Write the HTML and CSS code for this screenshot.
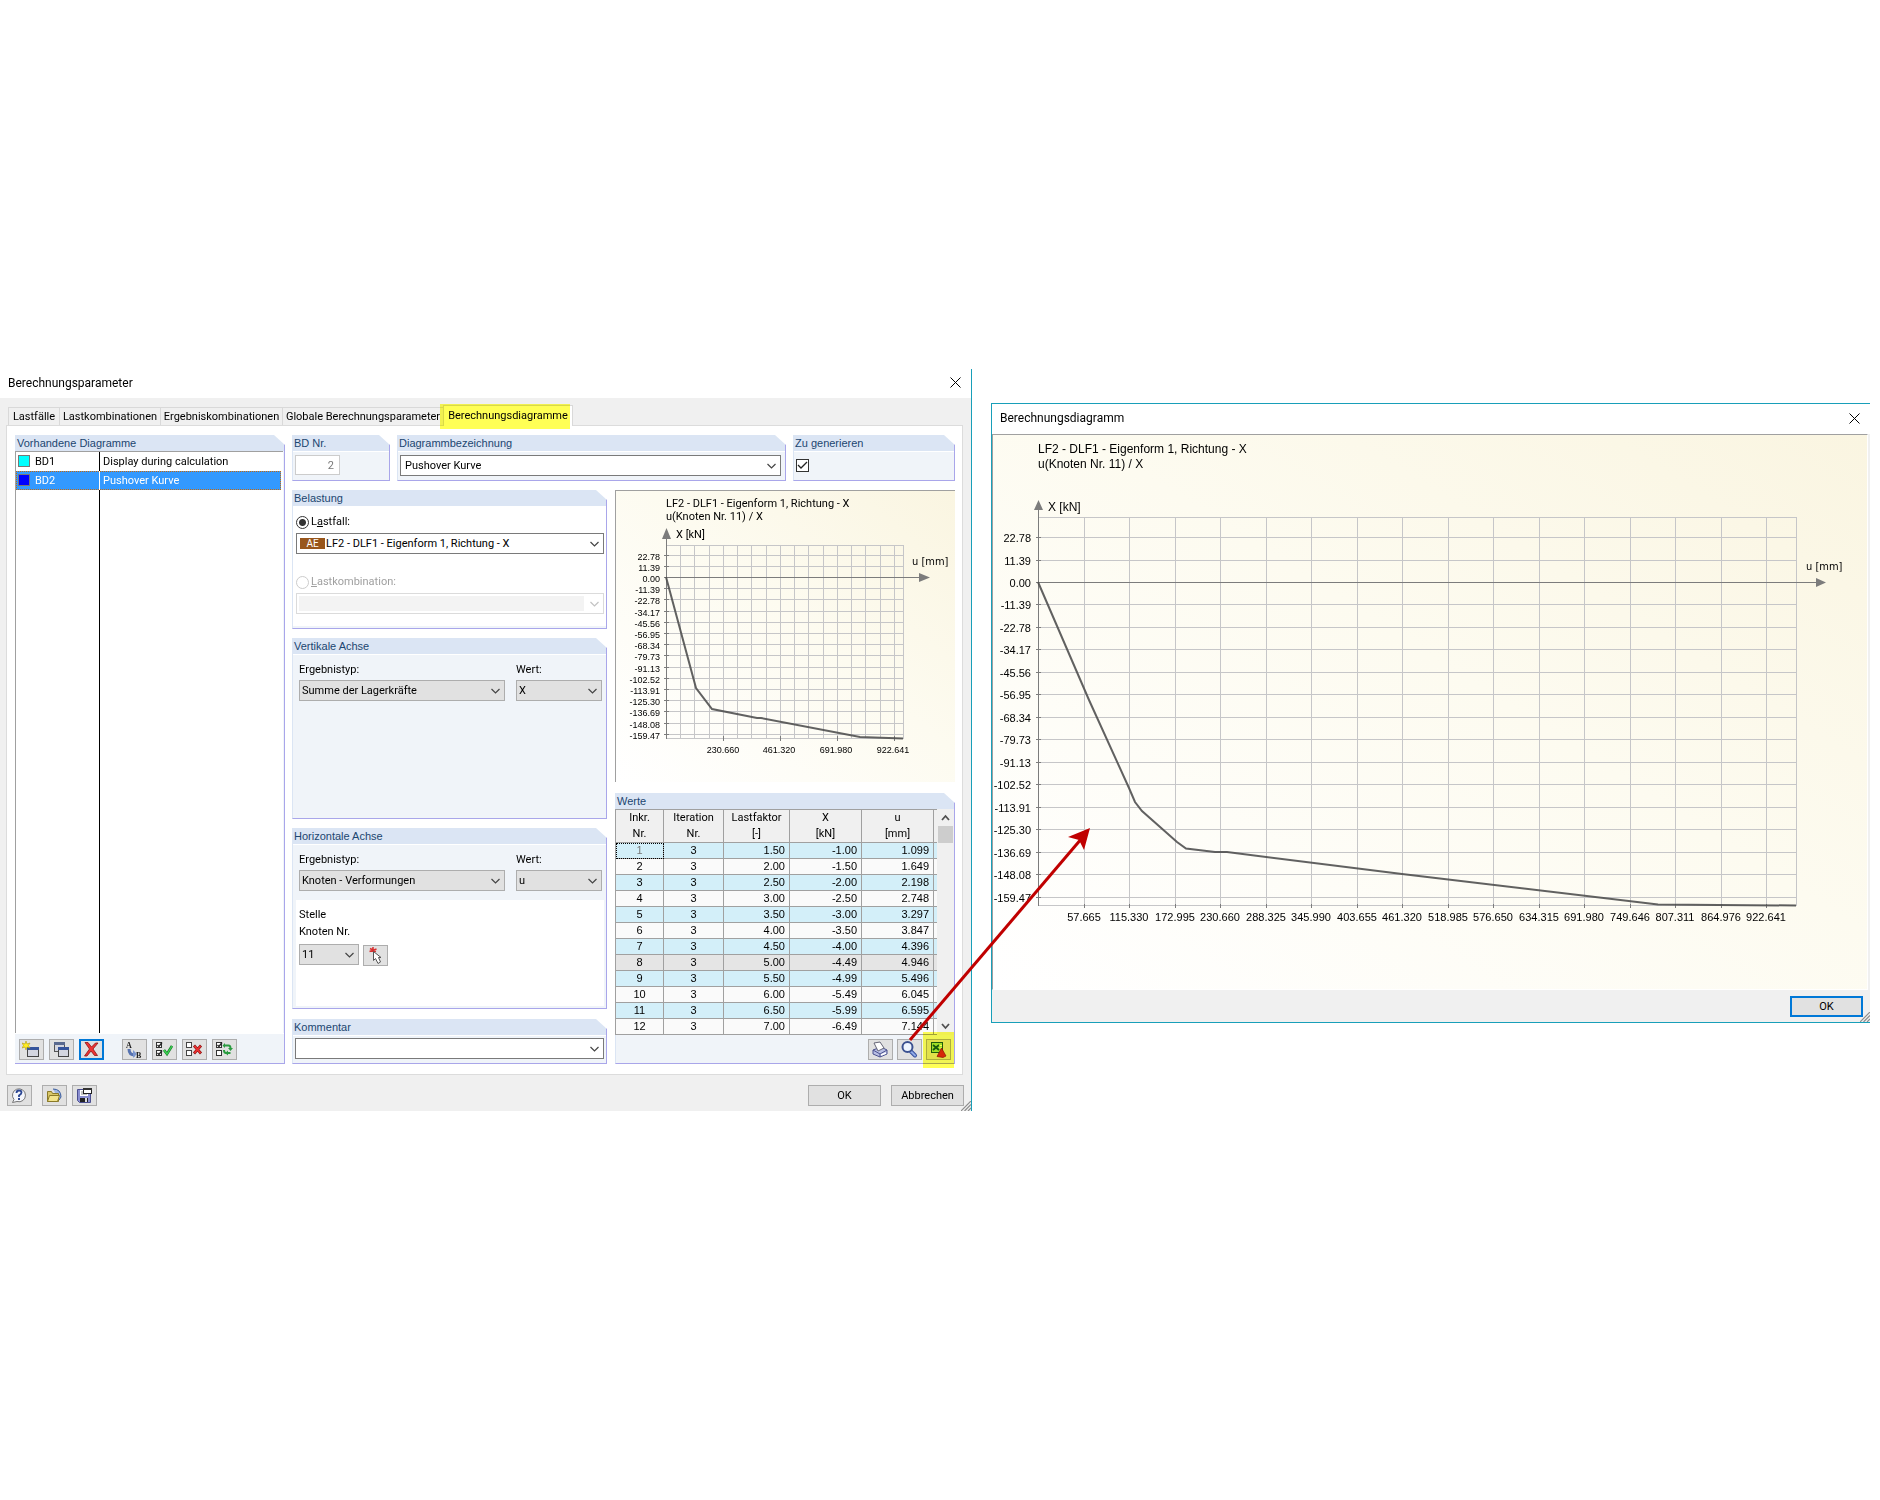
FILE: index.html
```html
<!DOCTYPE html>
<html lang="de">
<head>
<meta charset="utf-8">
<title>Berechnungsparameter</title>
<link rel="stylesheet" href="styles.css">
</head>
<body>
<main class="workspace">
  <section class="dialog dialog-main" aria-labelledby="title-main">
    <header class="titlebar">
      <h1 id="title-main">Berechnungsparameter</h1>
      <button class="close" aria-label="Schließen"><svg width="11" height="11" viewBox="0 0 11 11"><path d="M.5.5l10 10M10.500.5l-10 10" stroke="#000" fill="none"/></svg></button>
    </header>
    <nav class="tabs" role="tablist">
      <button class="tab tab-1" role="tab">Lastfälle</button>
      <button class="tab tab-2" role="tab">Lastkombinationen</button>
      <button class="tab tab-3" role="tab">Ergebniskombinationen</button>
      <button class="tab tab-4" role="tab">Globale Berechnungsparameter</button>
      <button class="tab tab-5 active" role="tab" aria-selected="true">Berechnungsdiagramme</button>
    </nav>
    <div class="panel">
      <section class="group list-group">
        <h2>Vorhandene Diagramme</h2>
        <ul class="diagram-list">
          <li><span class="nr"><i class="swatch cyan"></i>BD1</span><span class="name">Display during calculation</span></li>
          <li class="selected"><span class="nr"><i class="swatch blue"></i>BD2</span><span class="name">Pushover Kurve</span></li>
          <li class="filler"><span class="nr"></span><span class="name"></span></li>
        </ul>
        <div class="toolbar">
          <button class="tool" aria-label="Neu"><svg viewBox="0 0 18 18"><rect x="5.500" y="6.500" width="11" height="9" fill="#d4d6e0" stroke="#444"/><path d="M5 6h12v3H5z" fill="#35549c"/><path d="M4 0l1 3 3-1-1.500 2.500L8 7 5 6 4 9 3 6 0 7l1.500-2.500L0 2l3 1z" fill="#ffee20" stroke="#b09a10" stroke-width=".6"/></svg></button>
          <button class="tool" aria-label="Kopieren"><svg viewBox="0 0 18 18"><rect x="2.500" y="1.500" width="10" height="9" fill="#d4d6e0" stroke="#555"/><path d="M2 1h11v3H2z" fill="#5a6a90"/><rect x="6.500" y="6.500" width="10" height="9" fill="#d4d6e0" stroke="#444"/><path d="M6 6h11v3H6z" fill="#35549c"/></svg></button>
          <button class="tool focus" aria-label="Löschen"><svg viewBox="0 0 18 18"><path d="M3 1.500h3l3.500 4.500L13.500 2l2.500 0-5 6 4.500 6.500-3 0L9 10l-4 5-2.500 0L7.500 8z" fill="#e33" stroke="#8c1414" stroke-width=".8"/></svg></button>
          <button class="tool apart" aria-label="Umbenennen"><svg viewBox="0 0 18 18"><path d="M4 8c0 5 3 6 6 6" fill="none" stroke="#5672b0" stroke-width="3"/><path d="M8 9l4 4-4 4z" fill="#7c97d0"/><text x="1" y="7" class="icon-letter">A</text><text x="11" y="17" class="icon-letter">B</text></svg></button>
          <button class="tool" aria-label="Alle wählen"><svg viewBox="0 0 18 18"><g fill="#fff" stroke="#333"><rect x="1.500" y="1.500" width="5" height="5"/><rect x="1.500" y="9.500" width="5" height="5"/></g><path d="M2.500 4l1.500 1.500L7 1.500M2.500 12L4 13.500 7 9.500" stroke="#222" stroke-width="1.300" fill="none"/><path d="M9 9l3 4 5-8" fill="none" stroke="#167a28" stroke-width="2.600"/><path d="M9 9l3 4 5-8" fill="none" stroke="#3cd452" stroke-width="1.300"/></svg></button>
          <button class="tool" aria-label="Alle abwählen"><svg viewBox="0 0 18 18"><g fill="#fff" stroke="#444"><rect x="1.500" y="1.500" width="5" height="5"/><rect x="1.500" y="9.500" width="5" height="5"/></g><path d="M9 4.500l7 8M16 4.500l-7 8" stroke="#8c1414" stroke-width="2.800"/><path d="M9.500 5l6 7M15.500 5l-6 7" stroke="#ee3030" stroke-width="1.800"/></svg></button>
          <button class="tool" aria-label="Auswahl umkehren"><svg viewBox="0 0 18 18"><g fill="#fff" stroke="#333"><rect x="1.500" y="1.500" width="5" height="5"/><rect x="1.500" y="9.500" width="5" height="5"/></g><path d="M2.500 4l1.500 1.500L7 1.500" stroke="#222" stroke-width="1.300" fill="none"/><path d="M9 4.500h4.500q2 0 2 3M15.500 12H11q-2 0-2-3" stroke="#2a9c40" stroke-width="2" fill="none"/><path d="M13 7h5l-2.500 3zM13 9.500v5L10 12zM10 2v5L7.500 4.500z" fill="#2a9c40"/></svg></button>
        </div>
      </section>

      <div class="settings">
        <div class="top-row">
          <section class="group">
            <h2><label for="bd-nr">BD Nr.</label></h2>
            <div class="group-body"><input class="number" id="bd-nr" type="text" value="2" disabled></div>
          </section>
          <section class="group">
            <h2><label for="bd-name">Diagrammbezeichnung</label></h2>
            <div class="group-body"><select class="combo" id="bd-name"><option>Pushover Kurve</option></select></div>
          </section>
          <section class="group">
            <h2><label for="generate">Zu generieren</label></h2>
            <div class="group-body check-body"><input class="check" id="generate" type="checkbox" checked></div>
          </section>
        </div>

        <div class="columns">
          <div class="column">
            <section class="group load-group">
              <h2>Belastung</h2>
              <div class="load-body">
                <label class="radio-row"><input type="radio" name="load" checked><span>L<u>a</u>stfall:</span></label>
                <div class="load-select"><span class="badge">AE</span><select class="combo" aria-label="Lastfall"><option>LF2 - DLF1 - Eigenform 1, Richtung - X</option></select></div>
                <label class="radio-row off"><input type="radio" name="load" disabled><span><u>L</u>astkombination:</span></label>
                <select class="combo empty" aria-label="Lastkombination" disabled><option></option></select>
              </div>
            </section>
            <section class="group axis-group">
              <h2>Vertikale Achse</h2>
              <div class="axis-fields">
                <label class="field">Ergebnistyp:<select class="drop"><option>Summe der Lagerkräfte</option></select></label>
                <label class="field">Wert:<select class="drop"><option>X</option></select></label>
              </div>
            </section>
            <section class="group axis-group grow">
              <h2>Horizontale Achse</h2>
              <div class="axis-fields">
                <label class="field">Ergebnistyp:<select class="drop"><option>Knoten - Verformungen</option></select></label>
                <label class="field">Wert:<select class="drop"><option>u</option></select></label>
              </div>
              <div class="location">
                <p>Stelle</p>
                <p><label for="node">Knoten Nr.</label></p>
                <div class="node-row">
                  <select class="drop node" id="node"><option>11</option></select>
                  <button class="tool pick" aria-label="Knoten wählen"><svg viewBox="0 0 18 18"><path d="M4 1.500l6 3M3.500 4.500l7-2.500M7 0v5" stroke="#d83030" stroke-width="1.500"/><path d="M7.500 4.500v9l2-2 2.500 5 2.500-1.500-2-4.500h2.500z" fill="#fff" stroke="#555"/></svg></button>
                </div>
              </div>
            </section>
            <section class="group">
              <h2><label for="comment">Kommentar</label></h2>
              <div class="group-body comment-body"><select class="combo" id="comment"><option></option></select></div>
            </section>
          </div>

          <div class="column results">
            <figure class="chart small">
              <svg viewBox="0 0 339 291" role="img" aria-label="Pushover Kurve">
                <path class="grid" d="M50 54.500H288M50 64.500H288M50 75.500H288M50 97.500H288M50 108.500H288M50 120.500H288M50 131.500H288M50 142.500H288M50 153.500H288M50 164.500H288M50 176.500H288M50 187.500H288M50 198.500H288M50 209.500H288M50 220.500H288M50 232.500H288M50 243.500H288M50 247.500H288M64.500 54V248M78.500 54V248M93.500 54V248M107.500 54V248M121.500 54V248M135.500 54V248M150.500 54V248M164.500 54V248M178.500 54V248M192.500 54V248M207.500 54V248M221.500 54V248M235.500 54V248M249.500 54V248M264.500 54V248M278.500 54V248M287.500 54V248"/>
                <path class="axis" d="M50.500 40V248M48 86.500H305M48 64.500h5M48 75.500h5M48 97.500h5M48 108.500h5M48 120.500h5M48 131.500h5M48 142.500h5M48 153.500h5M48 164.500h5M48 176.500h5M48 187.500h5M48 198.500h5M48 209.500h5M48 220.500h5M48 232.500h5M48 243.500h5M107.500 245v5M164.500 245v5M221.500 245v5M278.500 245v5"/>
                <path class="tip" d="M50.500 37l4.500 11h-9zM314 86.500l-11-4.500v9z"/>
                <path class="curve" d="M50 86L80 197L96 218L141 227H145L244 246L287 247.500"/>
                <text class="head" x="50" y="16">LF2 - DLF1 - Eigenform 1, Richtung - X</text>
                <text class="head" x="50" y="29">u(Knoten Nr. 11) / X</text>
                <text class="head" x="60" y="47">X [kN]</text>
                <text class="unit" x="296" y="74">u [mm]</text>
                <g class="y-labels"><text x="44" y="69">22.78</text><text x="44" y="80">11.39</text><text x="44" y="91">0.00</text><text x="44" y="102">-11.39</text><text x="44" y="113">-22.78</text><text x="44" y="125">-34.17</text><text x="44" y="136">-45.56</text><text x="44" y="147">-56.95</text><text x="44" y="158">-68.34</text><text x="44" y="169">-79.73</text><text x="44" y="181">-91.13</text><text x="44" y="192">-102.52</text><text x="44" y="203">-113.91</text><text x="44" y="214">-125.30</text><text x="44" y="225">-136.69</text><text x="44" y="237">-148.08</text><text x="44" y="248">-159.47</text></g>
                <g class="x-labels"><text x="107" y="262">230.660</text><text x="163" y="262">461.320</text><text x="220" y="262">691.980</text><text x="277" y="262">922.641</text></g>
              </svg>
            </figure>
            <section class="group values">
              <h2>Werte</h2>
              <div class="table-area">
                <table>
                  <colgroup><col class="c1"><col class="c2"><col class="c3"><col class="c4"><col class="c5"><col></colgroup>
                  <thead><tr><th>Inkr.<br>Nr.</th><th>Iteration<br>Nr.</th><th>Lastfaktor<br>[-]</th><th>X<br>[kN]</th><th>u<br>[mm]</th><th></th></tr></thead>
                  <tbody>
                    <tr><td class="current">1</td><td>3</td><td>1.50</td><td>-1.00</td><td>1.099</td><td></td></tr>
                    <tr><td>2</td><td>3</td><td>2.00</td><td>-1.50</td><td>1.649</td><td></td></tr>
                    <tr><td>3</td><td>3</td><td>2.50</td><td>-2.00</td><td>2.198</td><td></td></tr>
                    <tr><td>4</td><td>3</td><td>3.00</td><td>-2.50</td><td>2.748</td><td></td></tr>
                    <tr><td>5</td><td>3</td><td>3.50</td><td>-3.00</td><td>3.297</td><td></td></tr>
                    <tr><td>6</td><td>3</td><td>4.00</td><td>-3.50</td><td>3.847</td><td></td></tr>
                    <tr><td>7</td><td>3</td><td>4.50</td><td>-4.00</td><td>4.396</td><td></td></tr>
                    <tr class="marked"><td>8</td><td>3</td><td>5.00</td><td>-4.49</td><td>4.946</td><td></td></tr>
                    <tr><td>9</td><td>3</td><td>5.50</td><td>-4.99</td><td>5.496</td><td></td></tr>
                    <tr><td>10</td><td>3</td><td>6.00</td><td>-5.49</td><td>6.045</td><td></td></tr>
                    <tr><td>11</td><td>3</td><td>6.50</td><td>-5.99</td><td>6.595</td><td></td></tr>
                    <tr><td>12</td><td>3</td><td>7.00</td><td>-6.49</td><td>7.144</td><td></td></tr>
                  </tbody>
                </table>
                <div class="scrollbar" aria-hidden="true">
                  <svg width="9" height="7" viewBox="0 0 9 7"><path d="M1 6l3.500-4L8 6" fill="none" stroke="#505050" stroke-width="1.800"/></svg>
                  <div class="thumb"></div>
                  <svg class="down" width="9" height="7" viewBox="0 0 9 7"><path d="M1 1l3.500 4L8 1" fill="none" stroke="#505050" stroke-width="1.800"/></svg>
                </div>
              </div>
              <div class="value-tools">
                <button class="tool" aria-label="Drucken"><svg viewBox="0 0 18 18"><path d="M2 9l8-3 6 3v4l-7 3-7-3z" fill="#b9bfe4" stroke="#4b518e"/><path d="M2 9l7 4 7-4M9 13v3" stroke="#4b518e" fill="none"/><path d="M3 2l6-1 4 6-6 3z" fill="#fff" stroke="#667"/><path d="M10 14l5-2" stroke="#fff" stroke-width="1.500"/></svg></button>
                <button class="tool" aria-label="Vergrößern"><svg viewBox="0 0 18 18"><path d="M11 10.500l4 4" stroke="#344f9e" stroke-width="4" stroke-linecap="round"/><path d="M11 10.500l4 4" stroke="#8fa9e6" stroke-width="2" stroke-linecap="round"/><circle cx="7.500" cy="6" r="5" fill="#eef5ff" stroke="#3b5190" stroke-width="2"/></svg></button>
                <span class="marked-tool"><button class="tool" aria-label="Excel-Export"><svg viewBox="0 0 18 18"><rect x="2.500" y="1.500" width="11" height="10" fill="#9fe070" stroke="#1f5c20"/><path d="M4 4l6 5M10 4L4 9" stroke="#185a22" stroke-width="1.800"/><path d="M10.500 4.500H13M10.500 7H13" stroke="#fff"/><path d="M12.500 7l4.500 8-3 1.500-6-1z" fill="#d62718" stroke="#8c1010" stroke-width=".7"/></svg></button></span>
              </div>
            </section>
          </div>
        </div>
      </div>
    </div>
    <footer class="footer">
      <button class="tool" aria-label="Hilfe"><svg viewBox="0 0 18 18"><path d="M2.500 15.500l1.500-3a6.500 6.500 0 1 1 3 2z" fill="#f4f6fb" stroke="#777"/><path d="M6.500 6q0-2.500 2.500-2.500t2.500 2q0 1.500-2.500 3v1.500" fill="none" stroke="#2c4794" stroke-width="1.800"/><path d="M8 11h2v2H8z" fill="#2c4794"/></svg></button>
      <button class="tool gap" aria-label="Öffnen"><svg viewBox="0 0 18 18"><path d="M8 2q8 0 8 8l-2 3" fill="#9eb6e2" stroke="#3b5c9c"/><path d="M2.500 4.500h4l1 2h6v8h-11z" fill="#d9c768" stroke="#8a7a28"/><path d="M2.500 14.500l2-6h10l-2 6z" fill="#f2e48c" stroke="#8a7a28"/></svg></button>
      <button class="tool" aria-label="Speichern"><svg viewBox="0 0 18 18"><path d="M2.500 2.500h13v13h-11l-2-2z" fill="#8a8ed0" stroke="#4a4e90"/><rect x="5" y="3" width="8" height="6" fill="#fff"/><path d="M6 5h6M6 7h6" stroke="#888"/><rect x="5" y="11" width="8" height="4" fill="#222"/><rect x="10" y="11" width="2" height="4" fill="#ddd"/><rect x="8.500" y="1.500" width="8" height="5" fill="#fff" stroke="#222"/><path d="M8 1h9v2H8z" fill="#333"/></svg></button>
      <button class="push first">OK</button>
      <button class="push">Abbrechen</button>
      <svg class="grip" viewBox="0 0 10 10"><path d="M0 10L10 0M3.500 10L10 3.500M7 10l3-3" stroke="#8c8c8c" stroke-width="1.200"/></svg>
    </footer>
  </section>

  <section class="dialog dialog-chart" aria-labelledby="title-chart">
    <header class="titlebar">
      <h1 id="title-chart">Berechnungsdiagramm</h1>
      <button class="close" aria-label="Schließen"><svg width="11" height="11" viewBox="0 0 11 11"><path d="M.5.5l10 10M10.500.5l-10 10" stroke="#000" fill="none"/></svg></button>
    </header>
    <figure class="chart large">
      <svg viewBox="0 0 874 554" role="img" aria-label="Pushover Kurve">
        <path class="grid" d="M45 82.500H804M45 102.500H804M45 125.500H804M45 169.500H804M45 192.500H804M45 214.500H804M45 237.500H804M45 259.500H804M45 282.500H804M45 304.500H804M45 327.500H804M45 349.500H804M45 372.500H804M45 394.500H804M45 417.500H804M45 439.500H804M45 462.500H804M45 470.500H804M91.500 82V471M136.500 82V471M182.500 82V471M227.500 82V471M273.500 82V471M318.500 82V471M364.500 82V471M409.500 82V471M455.500 82V471M500.500 82V471M546.500 82V471M591.500 82V471M637.500 82V471M682.500 82V471M728.500 82V471M773.500 82V471M803.500 82V471"/>
        <path class="axis" d="M45.500 70V471M43 147.500H825M43 102.500h5M43 125.500h5M43 169.500h5M43 192.500h5M43 214.500h5M43 237.500h5M43 259.500h5M43 282.500h5M43 304.500h5M43 327.500h5M43 349.500h5M43 372.500h5M43 394.500h5M43 417.500h5M43 439.500h5M43 462.500h5M91.500 469v4M136.500 469v4M182.500 469v4M227.500 469v4M273.500 469v4M318.500 469v4M364.500 469v4M409.500 469v4M455.500 469v4M500.500 469v4M546.500 469v4M591.500 469v4M637.500 469v4M682.500 469v4M728.500 469v4M773.500 469v4"/>
        <path class="tip" d="M45.500 65l4.500 10h-9zM833 147.500l-10-4.500v9z"/>
        <path class="curve" d="M45 147L96 265L136 353L142 367L149 376L184 407L193 413.500L222 417H234L409 439L665 469.500L803 470.500"/>
        <text class="head" x="45" y="18">LF2 - DLF1 - Eigenform 1, Richtung - X</text>
        <text class="head" x="45" y="33">u(Knoten Nr. 11) / X</text>
        <text class="head" x="55" y="76">X [kN]</text>
        <text class="unit" x="813" y="135">u [mm]</text>
        <g class="y-labels"><text x="38" y="107">22.78</text><text x="38" y="130">11.39</text><text x="38" y="152">0.00</text><text x="38" y="174">-11.39</text><text x="38" y="197">-22.78</text><text x="38" y="219">-34.17</text><text x="38" y="242">-45.56</text><text x="38" y="264">-56.95</text><text x="38" y="287">-68.34</text><text x="38" y="309">-79.73</text><text x="38" y="332">-91.13</text><text x="38" y="354">-102.52</text><text x="38" y="377">-113.91</text><text x="38" y="399">-125.30</text><text x="38" y="422">-136.69</text><text x="38" y="444">-148.08</text><text x="38" y="467">-159.47</text></g>
        <g class="x-labels"><text x="91" y="486">57.665</text><text x="136" y="486">115.330</text><text x="182" y="486">172.995</text><text x="227" y="486">230.660</text><text x="273" y="486">288.325</text><text x="318" y="486">345.990</text><text x="364" y="486">403.655</text><text x="409" y="486">461.320</text><text x="455" y="486">518.985</text><text x="500" y="486">576.650</text><text x="546" y="486">634.315</text><text x="591" y="486">691.980</text><text x="637" y="486">749.646</text><text x="682" y="486">807.311</text><text x="728" y="486">864.976</text><text x="773" y="486">922.641</text></g>
      </svg>
    </figure>
    <footer class="footer">
      <button class="push first focus">OK</button>
      <svg class="grip" viewBox="0 0 10 10"><path d="M0 10L10 0M3.500 10L10 3.500M7 10l3-3" stroke="#8c8c8c" stroke-width="1.200"/></svg>
    </footer>
  </section>

  <svg class="pointer" width="184" height="214" viewBox="0 0 184 214" aria-hidden="true"><path d="M2 213L174 11" stroke="#c00000" stroke-width="3"/><path d="M182 1l-22 9 11 3 5 10z" fill="#c00000"/></svg>
</main>
</body>
</html>
```
FILE: styles.css
```css
:root {
  --ui: Roboto, "DejaVu Sans Condensed", sans-serif;
  --arial: "Liberation Sans", Arial, sans-serif;
  --face: #f0f0f0;
  --head: #dbe5f4;
  --edge: #a9a6ea;
  --teal: #189fb9;
  --line: #a0a0a0;
  --chevron: url("data:image/svg+xml,%3Csvg xmlns='http://www.w3.org/2000/svg' width='9' height='6' viewBox='0 0 9 6'%3E%3Cpath d='M.5 1l4 4 4-4' fill='none' stroke='%23444' stroke-width='1.200'/%3E%3C/svg%3E");
  --chevron-off: url("data:image/svg+xml,%3Csvg xmlns='http://www.w3.org/2000/svg' width='9' height='6' viewBox='0 0 9 6'%3E%3Cpath d='M.5 1l4 4 4-4' fill='none' stroke='%23aaa' stroke-width='1.200'/%3E%3C/svg%3E");
}

* { box-sizing: border-box; }

body {
  margin: 0;
  background: #fff;
  color: #000;
  font: 11px/16px var(--ui);
}

button, select, input { font: inherit; color: inherit; margin: 0; }
h1, h2, p, ul, figure { margin: 0; padding: 0; font-weight: normal; }

.workspace {
  position: relative;
  display: grid;
  grid-template-columns: 972fr 879fr;
  align-items: start;
  gap: 19px;
  padding: 369px 10px 0 0;
}

/* Windows */
.dialog { background: var(--face); }
.dialog-main { border-right: 1px solid var(--teal); }
.dialog-chart { margin-top: 34px; border: solid var(--teal); border-width: 1px 0 1px 1px; }
.titlebar {
  display: flex;
  align-items: center;
  justify-content: space-between;
  height: 29px;
  padding: 0 10px 2px 8px;
  background: #fff;
}
.dialog-chart .titlebar { height: 30px; }
.titlebar h1 { font: 12px/16px var(--ui); }
.close { display: flex; padding: 0; border: 0; background: none; }

/* Tabs */
.tabs { display: flex; align-items: flex-end; height: 27px; padding-left: 8px; }
.tab {
  height: 18px;
  padding: 1px 0 0;
  border: solid #d9d9d9;
  border-width: 1px 0 0 1px;
  background: var(--face);
  line-height: 16px;
  white-space: nowrap;
}
.tab-1 { width: 51px; }
.tab-2 { width: 101px; }
.tab-3 { width: 122px; }
.tab-4 { width: 161px; }
.tab-5 { width: 130px; }
.tab.active {
  position: relative;
  height: 21px;
  margin-bottom: -1px;
  padding: 0 0 1px;
  border-right-width: 1px;
  background: #fff;
}
.tab.active::after {
  content: "";
  position: absolute;
  inset: -2px 2px -3px -4px;
  background: #ffff55;
  mix-blend-mode: multiply;
}

.panel {
  display: grid;
  grid-template-columns: 270px 1fr;
  gap: 7px;
  margin: 0 8px 0 6px;
  padding: 9px 7px 10px 8px;
  border: 1px solid #dcdcdc;
  background: #fff;
}

/* Group boxes */
.group {
  display: flex;
  flex-direction: column;
  border: 1px solid var(--edge);
  border-top: 0;
  border-left-color: var(--head);
  background: #f0f4f9;
}
.group h2 {
  position: relative;
  height: 16px;
  padding-left: 1px;
  background: var(--head);
  color: #1b4670;
  font: 11px/16px var(--arial);
}
.group h2::after {
  content: "";
  position: absolute;
  top: 0;
  right: -1px;
  width: 11px;
  height: 10px;
  background: #fff;
  clip-path: polygon(0 0, 100% 0, 100% 100%);
}
.group-body { padding: 3px 4px 4px 2px; border-top: 1px solid #fff; display: flex; }
.check-body { padding: 7px 2px; }
.comment-body { padding: 2px 2px 4px; }

/* List of diagrams */
.list-group { border-left: 0; }
.list-group h2 { padding-left: 2px; }
.diagram-list {
  display: flex;
  flex: 1;
  flex-direction: column;
  margin-right: 1px;
  border: solid var(--line);
  border-width: 1px 0 0 1px;
  background: #fff;
  list-style: none;
}
.diagram-list li { display: flex; height: 19px; line-height: 20px; }
.diagram-list .filler { flex: 1; }
.nr {
  display: flex;
  gap: 5px;
  width: 84px;
  padding-left: 2px;
  border-right: 1px solid #000;
}
.name { padding-left: 3px; }
.swatch { width: 12px; height: 12px; margin-top: 3px; border: 1px solid #777; }
.cyan { background: #0ff; }
.blue { background: #00f; }
.selected { margin-right: 2px; outline: 1px dotted #c8690a; outline-offset: -1px; background: #3399ff; color: #fff; }
.selected .nr { border-color: #fff; }
.toolbar { display: flex; gap: 5px; padding: 5px 4px 3px; border-top: 1px solid #fff; }

.tool {
  display: flex;
  align-items: center;
  width: 25px;
  height: 21px;
  padding: 0 0 0 2px;
  border: 1px solid #adadad;
  background: #e1e1e1;
}
.tool svg { flex: none; width: 18px; height: 18px; }
.tool.apart { margin-left: 13px; }
.tool.focus { padding-left: 1px; border: 2px solid #0078d7; }
.tool.pick { margin-top: 1px; }
.icon-letter { font: bold 8px "Liberation Serif", serif; fill: #222; }

/* Form controls */
.combo, .drop {
  width: 100%;
  height: 21px;
  padding: 0 20px 0 4px;
  border: 1px solid #7a7a7a;
  border-radius: 0;
  appearance: none;
  background: #fff var(--chevron) no-repeat right 4px center;
}
.drop { padding-left: 2px; border-color: #adadad; background-color: #e1e1e1; }
.number {
  width: 45px;
  height: 20px;
  padding: 0 5px;
  border: 1px solid #ccc;
  background: #fff;
  color: #777;
  text-align: right;
}
.check {
  appearance: none;
  width: 13px;
  height: 13px;
  border: 1px solid #333;
  background: #fff url("data:image/svg+xml,%3Csvg xmlns='http://www.w3.org/2000/svg' width='11' height='11' viewBox='0 0 11 11'%3E%3Cpath d='M1 5l3 3 6-6' fill='none' stroke='%23222' stroke-width='1.300'/%3E%3C/svg%3E") center no-repeat;
}

.settings { display: flex; flex-direction: column; gap: 9px; min-width: 0; }
.top-row { display: grid; grid-template-columns: 98px 1fr 162px; gap: 7px; height: 46px; }
.columns { display: grid; grid-template-columns: 315px 1fr; gap: 8px; flex: 1; }
.column { display: flex; flex-direction: column; gap: 9px; min-width: 0; }
.results { gap: 11px; }

.load-body { margin-bottom: 2px; padding: 7px 2px 12px 3px; background: #fff; }
.radio-row { display: flex; align-items: center; gap: 2px; height: 18px; margin-bottom: 2px; }
.radio-row.off { margin-top: 19px; color: #a0a0a0; }
.radio-row input {
  appearance: none;
  width: 13px;
  height: 13px;
  border: 1px solid #333;
  border-radius: 50%;
  background: #fff;
}
.radio-row input:checked { background: radial-gradient(circle, #333 0 3px, #fff 4px); }
.radio-row input:disabled { border-color: #ccc; }
.load-select { position: relative; display: flex; }
.load-select .combo { padding-left: 29px; }
.badge {
  position: absolute;
  top: 5px;
  left: 4px;
  width: 25px;
  height: 11px;
  background: #98561c;
  color: #fff;
  font-size: 10px;
  line-height: 11px;
  text-align: center;
}
.combo.empty {
  display: block;
  border-color: #ccc;
  background:
    linear-gradient(#efefef, #efefef) 2px 2px / calc(100% - 21px) 15px no-repeat,
    var(--chevron-off) right 4px center no-repeat,
    #fff;
}

.axis-group { min-height: 181px; }
.grow { flex: 1; margin-bottom: 1px; }
.axis-fields {
  display: grid;
  grid-template-columns: 206px 1fr;
  gap: 11px;
  padding: 7px 4px 0 6px;
  border-top: 1px solid #fff;
}
.axis-fields .field { display: flex; flex-direction: column; gap: 2px; line-height: 16px; }
.location { flex: 1; margin: 9px 2px 2px 3px; padding: 6px 3px; background: #fff; line-height: 17px; }
.node-row { display: flex; align-items: flex-start; gap: 4px; margin-top: 4px; }
.drop.node { width: 60px; }

/* Charts */
.chart {
  border: solid var(--line);
  border-width: 1px 0 0 1px;
  background: linear-gradient(to top right, #fff, #fdfbf0 55%, #faf5e1);
}
.chart.large { margin-right: 2px; border-color: var(--line) #fff #fff var(--line); border-width: 1px; }
.chart svg { display: block; width: 100%; height: auto; }
.grid { stroke: #c6c6c8; fill: none; shape-rendering: crispEdges; }
.axis { stroke: #7c7c7c; fill: none; shape-rendering: crispEdges; }
.tip { fill: #7c7c7c; }
.curve { stroke: #505050; stroke-width: 2; stroke-opacity: .9; fill: none; }
.large text { font: 11px var(--arial); }
.small text { font: 9px var(--arial); }
.large .head { font-size: 12px; }
.small .head { font: 11px var(--ui); }
.chart .unit { font: 11px "DejaVu Sans Condensed", sans-serif; }
.y-labels { text-anchor: end; }
.x-labels { text-anchor: middle; }

/* Table of values */
.table-area { display: flex; margin-left: -1px; background: var(--face); }
table {
  flex: 1;
  table-layout: fixed;
  border-collapse: separate;
  border-spacing: 0;
  border-left: 1px solid var(--line);
  font: 11px/15px var(--arial);
}
.c1 { width: 48px; }
.c2 { width: 60px; }
.c3 { width: 66px; }
.c4, .c5 { width: 72px; }
th, td { padding: 0; border: solid var(--line); border-width: 0 1px 1px 0; }
th { height: 34px; border-top-width: 1px; font: 11px/16px var(--ui); }
td { height: 16px; padding-right: 4px; background: #fafafa; text-align: right; }
td:nth-child(-n+2) { padding: 0; text-align: center; }
th:last-child, td:last-child { padding: 0; border-right: 0; }
tr:nth-child(odd) td { background: #d3eff9; }
tr.marked td { background: #e5e5e5; }
.current { outline: 1px dotted #000; outline-offset: -1px; color: #777; }
.scrollbar {
  display: flex;
  flex-direction: column;
  align-items: center;
  width: 17px;
  padding: 5px 0;
}
.thumb { width: 15px; height: 17px; margin-top: 5px; background: #cdcdcd; }
.down { margin-top: auto; }
.value-tools { display: flex; justify-content: flex-end; gap: 4px; padding: 4px 3px 3px; }
.marked-tool { position: relative; }
.marked-tool::after {
  content: "";
  position: absolute;
  inset: -7px -3px -8px;
  background: #ffff55;
  mix-blend-mode: multiply;
  pointer-events: none;
}

/* Footers */
.footer { position: relative; display: flex; gap: 5px; padding: 10px 7px 5px; }
.footer .gap { margin-left: 5px; }
.push {
  width: 73px;
  height: 21px;
  margin-left: 5px;
  padding: 0;
  border: 1px solid #adadad;
  background: #e1e1e1;
}
.push.first { margin-left: auto; }
.push.focus { border: 2px solid #0078d7; }
.dialog-chart .footer { padding-top: 6px; }
.grip { position: absolute; right: 0; bottom: 0; width: 10px; height: 10px; }

.pointer { position: absolute; left: 908px; top: 827px; pointer-events: none; }
```
